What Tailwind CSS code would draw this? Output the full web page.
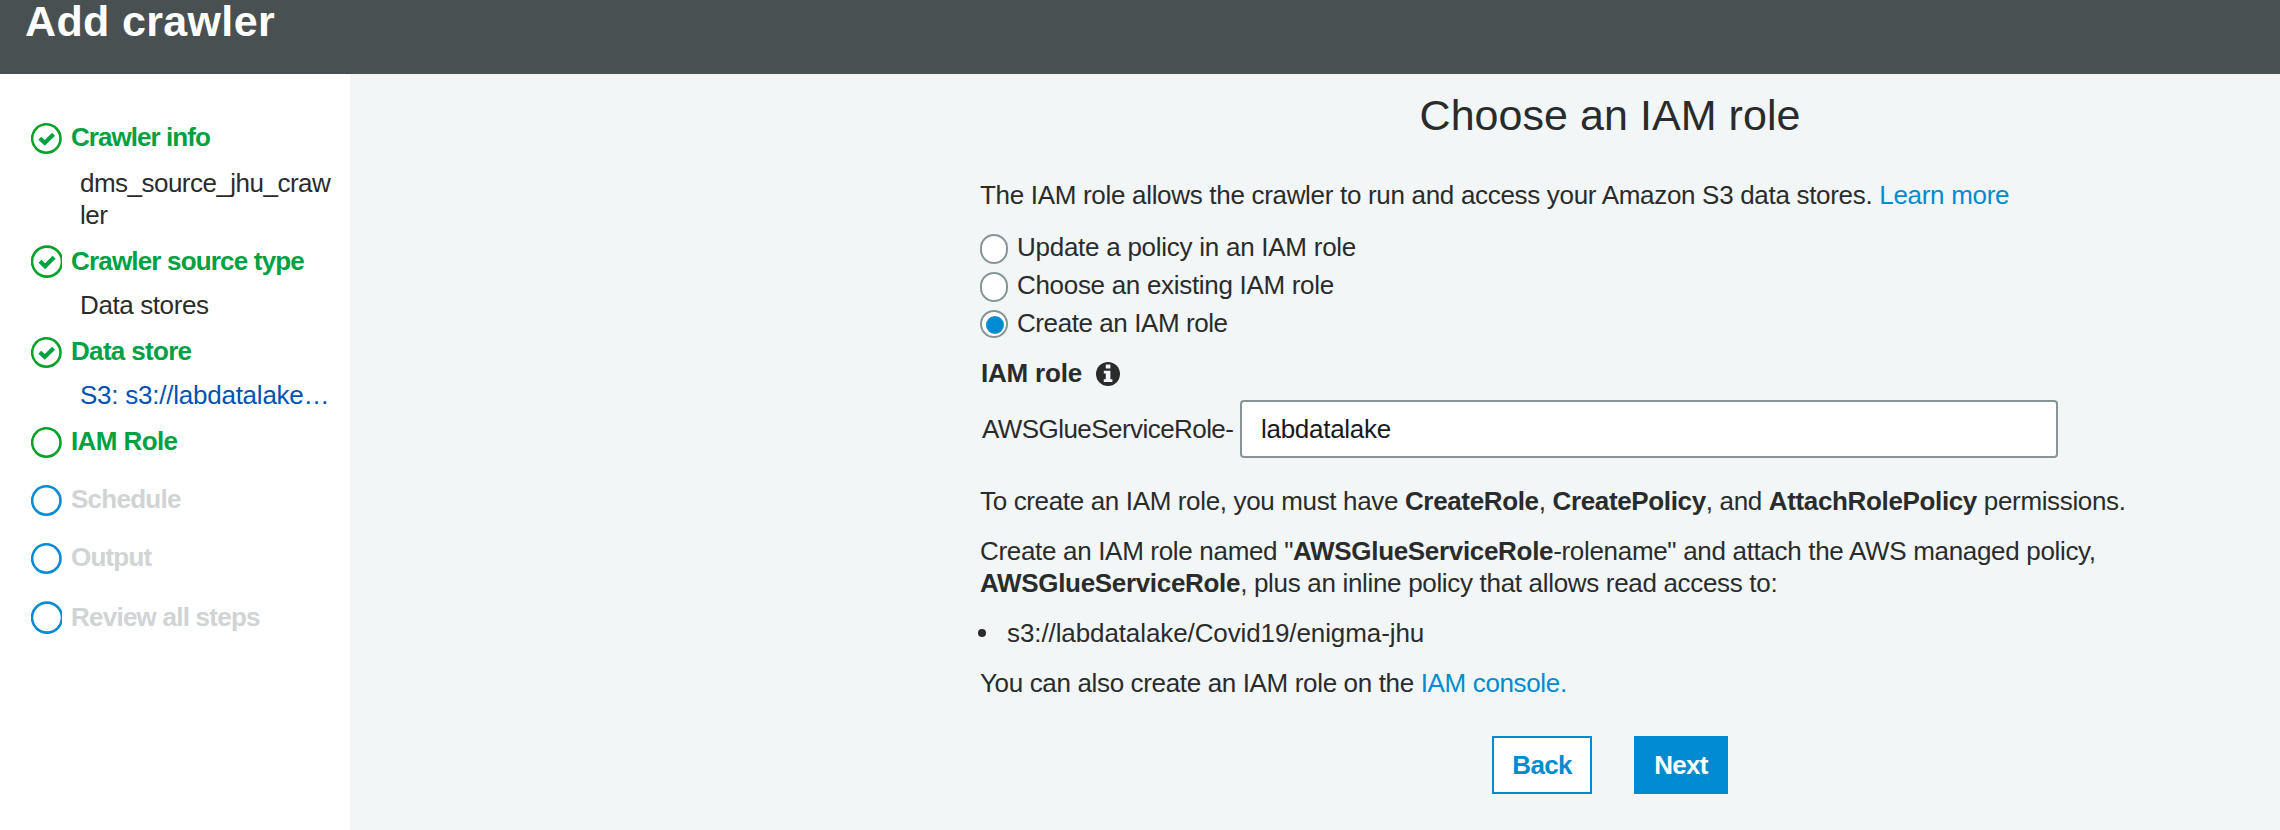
<!DOCTYPE html>
<html lang="en">
<head>
<meta charset="utf-8">
<title>Add crawler</title>
<script src="https://cdn.jsdelivr.net/npm/@tailwindcss/browser@4"></script>
</head>
<body class="flex h-[830px] w-[2280px] flex-col overflow-hidden bg-[#f2f6f7] font-['Liberation_Sans',Arial,sans-serif] text-[26px] leading-[32px] tracking-[-0.35px] text-[#2a2c2c]">
<header class="h-[74px] shrink-0 bg-[#485052] pl-[25px]">
  <h1 class="text-[43px] leading-[42px] font-bold tracking-[0.35px] text-white">Add crawler</h1>
</header>
<div class="flex flex-1">
  <nav class="w-[350px] shrink-0 bg-white pt-[47px] pl-[31px] whitespace-nowrap">
    <div class="flex h-[46px] items-start gap-[9px] font-bold tracking-[-0.95px] text-[#00a143]">
      <svg class="mt-[2px] shrink-0" width="31" height="31" viewBox="0 0 31 31" fill="none"><circle cx="15.3" cy="15.5" r="14.2" stroke="#09a12b" stroke-width="2.6"/><path d="M8.8 15.2l5 4.7 8.8-8.6" stroke="#00a143" stroke-width="4.2"/></svg>
      <span>Crawler info</span>
    </div>
    <div class="h-[78px] pl-[49px] tracking-[-0.52px]">dms_source_jhu_craw<br>ler</div>
    <div class="flex h-[44px] items-start gap-[9px] font-bold tracking-[-0.82px] text-[#00a143]">
      <svg class="shrink-0" width="31" height="33" viewBox="0 0 31 33" fill="none"><circle cx="16" cy="16.6" r="15" stroke="#09a12b" stroke-width="2.6"/><path d="M9 16.2l5.1 5 9-9" stroke="#00a143" stroke-width="4.2"/></svg>
      <span>Crawler source type</span>
    </div>
    <div class="h-[46px] pl-[49px] tracking-[-0.4px]">Data stores</div>
    <div class="flex h-[44px] items-start gap-[9px] font-bold tracking-[-0.68px] text-[#00a143]">
      <svg class="mt-[2px] shrink-0" width="31" height="31" viewBox="0 0 31 31" fill="none"><circle cx="15.3" cy="15.5" r="14.2" stroke="#09a12b" stroke-width="2.6"/><path d="M8.8 15.2l5 4.7 8.8-8.6" stroke="#00a143" stroke-width="4.2"/></svg>
      <span>Data store</span>
    </div>
    <div class="h-[46px] pl-[49px] tracking-[-0.24px] text-[#0052b3]">S3: s3://labdatalake…</div>
    <div class="flex h-[58px] items-start gap-[9px] font-bold tracking-[-0.6px] text-[#00a143]">
      <svg class="mt-[2px] shrink-0" width="31" height="31" viewBox="0 0 31 31" fill="none"><circle cx="15.3" cy="15.5" r="14.2" stroke="#09a12b" stroke-width="2.6"/></svg>
      <span>IAM Role</span>
    </div>
    <div class="flex h-[58px] items-start gap-[9px] font-bold tracking-[-0.75px] text-[#d0d4d4]">
      <svg class="mt-[2px] shrink-0" width="31" height="31" viewBox="0 0 31 31" fill="none"><circle cx="15.3" cy="15.5" r="14.2" stroke="#0a8bd2" stroke-width="2.6"/></svg>
      <span>Schedule</span>
    </div>
    <div class="flex h-[60px] items-start gap-[9px] font-bold tracking-[-0.8px] text-[#d0d4d4]">
      <svg class="mt-[2px] shrink-0" width="31" height="31" viewBox="0 0 31 31" fill="none"><circle cx="15.3" cy="15.5" r="14.2" stroke="#0a8bd2" stroke-width="2.6"/></svg>
      <span>Output</span>
    </div>
    <div class="flex items-start gap-[9px] font-bold tracking-[-0.76px] text-[#d0d4d4]">
      <svg class="shrink-0" width="31" height="33" viewBox="0 0 31 33" fill="none"><circle cx="16" cy="16.6" r="15" stroke="#0a8bd2" stroke-width="2.6"/></svg>
      <span>Review all steps</span>
    </div>
  </nav>
  <main class="ml-[630px] w-[1260px] pt-5 whitespace-nowrap">
    <h2 class="text-center text-[43px] leading-[42px] tracking-[0.05px]">Choose an IAM role</h2>
    <p class="mt-[43px] tracking-[-0.31px]">The IAM role allows the crawler to run and access your Amazon S3 data stores. <a class="text-[#008bd0]">Learn more</a></p>
    <div class="mt-[17px] flex flex-col">
      <label class="flex h-[38px] items-start gap-[9px]"><span class="mt-[6px] h-[30px] w-7 rounded-full border-2 border-[#879596] bg-white"></span><span class="mt-[3px] tracking-[-0.26px]">Update a policy in an IAM role</span></label>
      <label class="flex h-[38px] items-start gap-[9px]"><span class="mt-[6px] h-[30px] w-7 rounded-full border-2 border-[#879596] bg-white"></span><span class="mt-[3px] tracking-[-0.31px]">Choose an existing IAM role</span></label>
      <label class="flex h-[38px] items-start gap-[9px]"><span class="mt-[6px] h-7 w-7 rounded-full border-2 border-[#879596] bg-white pt-1 pl-1"><span class="block h-[18px] w-[18px] rounded-full bg-[#008bd0]"></span></span><span class="mt-[3px] tracking-[-0.42px]">Create an IAM role</span></label>
    </div>
    <div class="mt-[15px] flex items-start gap-[14px] pl-px font-bold tracking-[-0.2px]">
      <span class="w-[101px]">IAM role</span>
      <svg class="mt-[5px]" width="24" height="24" viewBox="0 0 24 24"><circle cx="12" cy="12" r="12" fill="#2a2c2c"/><path d="M9.8 2.5h4.6v4H9.8zM7.8 8.8h6.6v8.4h2V20H7.8v-2.8h2v-5.6h-2z" fill="#f2f6f7"/></svg>
    </div>
    <div class="mt-[11px] flex items-center pl-[2px]">
      <span class="w-[258px] tracking-[-0.56px]">AWSGlueServiceRole-</span>
      <div class="flex h-[58px] w-[818px] items-center rounded border-2 border-[#879596] bg-white pl-[19px] tracking-[-0.28px] text-[#16191f]">labdatalake</div>
    </div>
    <p class="mt-[27px]">To create an IAM role, you must have <b>CreateRole</b>, <b>CreatePolicy</b>, and <b>AttachRolePolicy</b> permissions.</p>
    <p class="mt-[18px] tracking-[-0.32px]">Create an IAM role named "<b>AWSGlueServiceRole</b>-rolename" and attach the AWS managed policy,<br><b>AWSGlueServiceRole</b>, plus an inline policy that allows read access to:</p>
    <div class="mt-[18px] flex items-center gap-[21px]"><span class="-ml-[2px] h-2 w-2 rounded-full bg-[#2a2c2c]"></span><span class="tracking-[-0.1px]">s3://labdatalake/Covid19/enigma-jhu</span></div>
    <p class="mt-[18px]">You can also create an IAM role on the <a class="text-[#008bd0]">IAM console.</a></p>
    <div class="mt-[37px] flex justify-center gap-[42px] font-bold tracking-[-0.7px]">
      <button class="h-[58px] w-[100px] border-2 border-[#008bd0] bg-white pb-px text-[#008bd0]">Back</button>
      <button class="h-[58px] w-[94px] bg-[#008bd0] pb-px text-white">Next</button>
    </div>
  </main>
</div>
</body>
</html>
